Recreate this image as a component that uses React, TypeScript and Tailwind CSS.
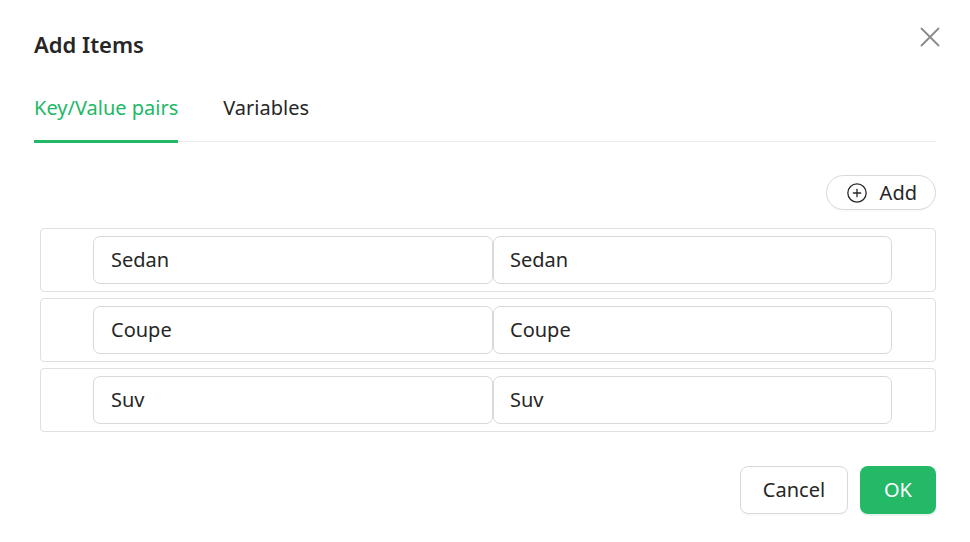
import { CirclePlus } from "lucide-react";

const ROWS = [
  { key: "Sedan", value: "Sedan" },
  { key: "Coupe", value: "Coupe" },
  { key: "Suv", value: "Suv" },
];

function CloseIcon() {
  return (
    <svg width="20" height="20" viewBox="0 0 20 20" fill="none" stroke="#8a8a8a" strokeWidth="1.8" strokeLinecap="round">
      <path d="M1.5 1.5 L18.5 18.5" />
      <path d="M18.5 1.5 L1.5 18.5" />
    </svg>
  );
}

export default function App() {
  return (
    <div className="w-[970px] h-[542px] bg-white text-[#262626] font-['Noto_Sans',sans-serif] flex flex-col px-[34px] pt-[27px]">
      {/* Header */}
      <div className="flex items-start justify-between">
        <h1 className="text-[22px] leading-[34px] font-semibold">Add Items</h1>
        <button className="mt-[0px] mr-[-4px]">
          <CloseIcon />
        </button>
      </div>

      {/* Tabs */}
      <div className="mt-[33px] flex gap-[45px] border-b border-[#ebebeb]">
        <div className="pb-[18px] border-b-[3px] border-[#22b866] mb-[-2px] text-[20px] leading-[28px] text-[#22b866]">
          Key/Value pairs
        </div>
        <div className="pb-[18px] text-[20px] leading-[28px]">Variables</div>
      </div>

      {/* Add button */}
      <div className="mt-[33px] flex justify-end">
        <button className="h-[35px] pl-[19px] pr-[18px] flex items-center gap-[12px] rounded-full border border-[#d9d9d9] shadow-[0_2px_0_rgba(0,0,0,0.02)] text-[20px]">
          <CirclePlus size={22} strokeWidth={1.4} className="text-[#262626]" />
          <span>Add</span>
        </button>
      </div>

      {/* Rows */}
      <div className="mt-[18px] ml-[6px] flex flex-col gap-[6px]">
        {ROWS.map((row) => (
          <div key={row.key} className="h-[64px] rounded-[4px] border border-[#e0e0e0] flex items-center pl-[52px]">
            <div className="w-[400px] h-[48px] rounded-[7px] border border-[#d9d9d9] flex items-center px-[17px] text-[20px]">
              {row.key}
            </div>
            <div className="w-[399px] h-[48px] rounded-[7px] border border-[#d9d9d9] flex items-center px-[16px] text-[20px]">
              {row.value}
            </div>
          </div>
        ))}
      </div>

      {/* Footer */}
      <div className="mt-[34px] flex justify-end gap-[12px]">
        <button className="w-[108px] h-[48px] rounded-[8px] border border-[#d9d9d9] bg-white text-[20px] shadow-[0_2px_0_rgba(0,0,0,0.02)]">
          Cancel
        </button>
        <button className="w-[76px] h-[48px] rounded-[8px] bg-[#23b967] text-white text-[20px] shadow-[0_2px_0_rgba(5,145,80,0.1)]">
          OK
        </button>
      </div>
    </div>
  );
}
